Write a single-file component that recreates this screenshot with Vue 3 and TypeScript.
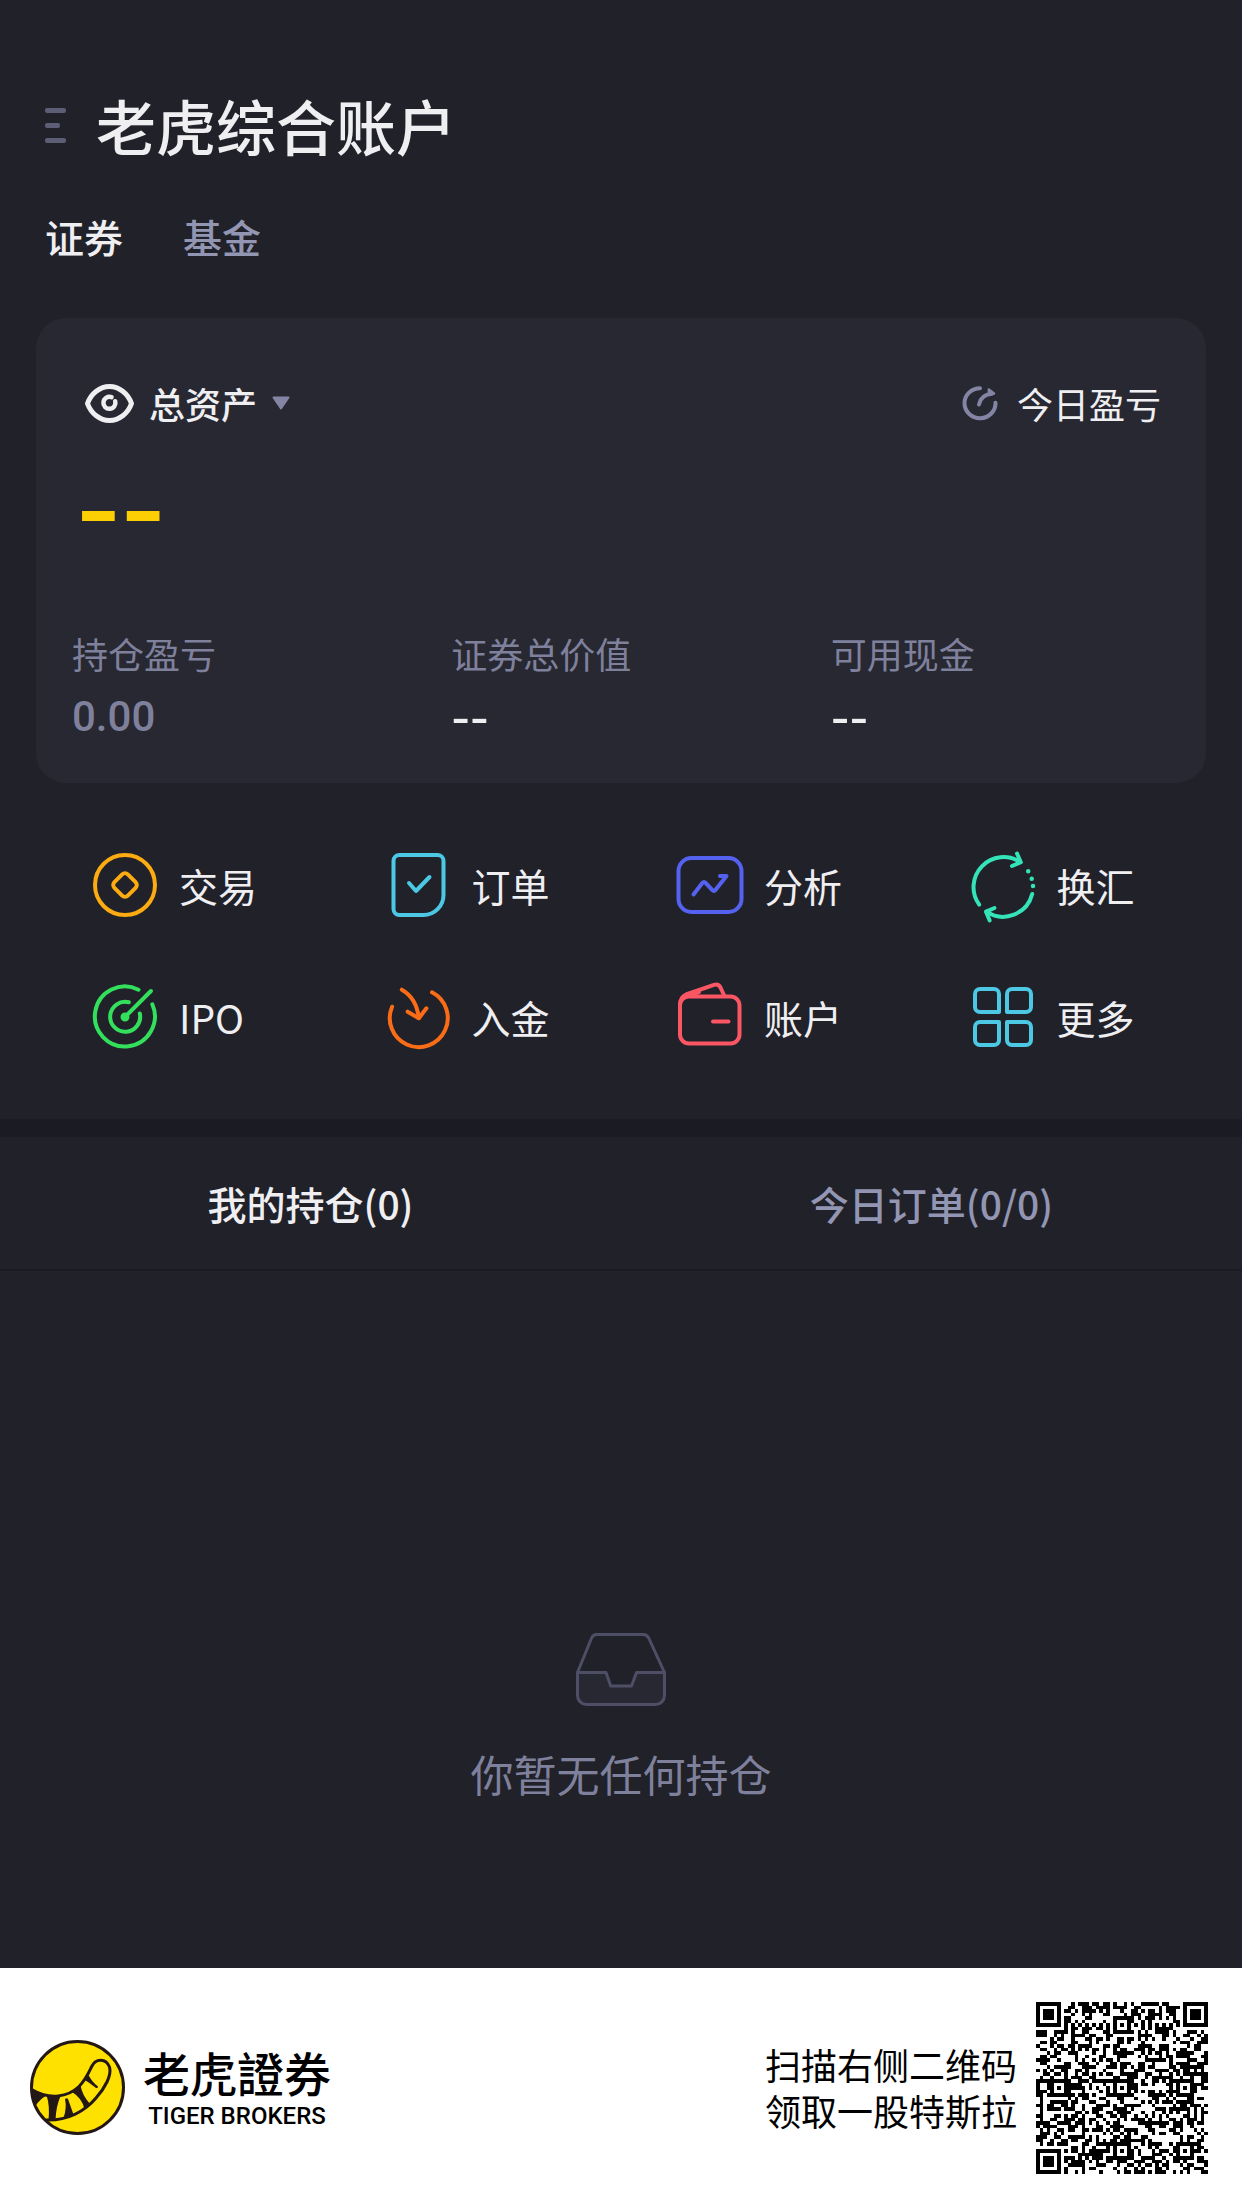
<script setup lang="ts">
import { ref } from 'vue'

type ActionId = 'trade' | 'order' | 'analysis' | 'exchange' | 'ipo' | 'deposit' | 'account' | 'more'

interface Action {
  id: ActionId
  label: string
  color: string
}

interface Stat {
  label: string
  value: string
  empty: boolean
}

const stats: Stat[] = [
  { label: '持仓盈亏', value: '0.00', empty: false },
  { label: '证券总价值', value: '--', empty: true },
  { label: '可用现金', value: '--', empty: true },
]

const actions: Action[] = [
  { id: 'trade', label: '交易', color: '#fcab10' },
  { id: 'order', label: '订单', color: '#4cc8e4' },
  { id: 'analysis', label: '分析', color: '#5562f0' },
  { id: 'exchange', label: '换汇', color: '#34e4b8' },
  { id: 'ipo', label: 'IPO', color: '#33e05c' },
  { id: 'deposit', label: '入金', color: '#fb6c16' },
  { id: 'account', label: '账户', color: '#fb5664' },
  { id: 'more', label: '更多', color: '#4cc8e4' },
]

const accountTabs = ['证券', '基金']
const activeAccount = ref(0)
const listTabs = ['我的持仓(0)', '今日订单(0/0)']
const activeList = ref(0)

const QR_SIZE = 49
const ALIGN = [6, 24, 42]

// Concentric square: dark ring, light ring, dark core
function ring(dx: number, dy: number, outer: number): boolean {
  const d = Math.max(Math.abs(dx), Math.abs(dy))
  return d === outer || d <= outer - 2
}

function moduleAt(x: number, y: number, noise: boolean): boolean {
  const last = QR_SIZE - 1
  for (const [cx, cy] of [[3, 3], [last - 3, 3], [3, last - 3]]) {
    const d = Math.max(Math.abs(x - cx), Math.abs(y - cy))
    if (d === 4) return false
    if (d < 4) return ring(x - cx, y - cy, 3)
  }
  for (const ay of ALIGN) {
    for (const ax of ALIGN) {
      const corner = (ax === 6 && ay !== 24) || (ax === 42 && ay === 6)
      if (!corner && Math.abs(x - ax) <= 2 && Math.abs(y - ay) <= 2) {
        return ring(x - ax, y - ay, 2)
      }
    }
  }
  if (x === 6) return y % 2 === 0
  if (y === 6) return x % 2 === 0
  return noise
}

function buildQr(): string {
  let seed = 20190817
  let d = ''
  for (let y = 0; y < QR_SIZE; y++) {
    for (let x = 0; x < QR_SIZE; x++) {
      seed = (Math.imul(seed, 1664525) + 1013904223) >>> 0
      if (moduleAt(x, y, seed / 4294967296 < 0.5)) d += `M${x} ${y}h1v1h-1z`
    }
  }
  return d
}

const qrPath = buildQr()
</script>

<template>
  <div class="page">
    <header class="header">
      <button class="menu" type="button" aria-label="菜单">
        <span class="bar"></span>
        <span class="bar short"></span>
        <span class="bar"></span>
      </button>
      <h1 class="title">老虎综合账户</h1>
    </header>

    <nav class="account-tabs">
      <button
        v-for="(tab, i) in accountTabs"
        :key="tab"
        type="button"
        class="account-tab"
        :class="{ active: i === activeAccount }"
        @click="activeAccount = i"
      >{{ tab }}</button>
    </nav>

    <section class="card">
      <div class="card-top">
        <button class="total" type="button">
          <svg class="eye" viewBox="0 0 49 39" aria-hidden="true">
            <path d="M2.5 19.5C6 9.500 15 2.500 24.500 2.500S43 9.500 46.500 19.500C43 29.500 34 36.500 24.500 36.500S6 29.500 2.500 19.500Z" fill="none" stroke="currentColor" stroke-width="5" stroke-linejoin="round" />
            <path d="M26.500 13.200A6 6 0 1 0 30.200 17.200" fill="none" stroke="currentColor" stroke-width="4.500" stroke-linecap="round" />
          </svg>
          <span>总资产</span>
          <svg class="caret" viewBox="0 0 18 14" aria-hidden="true">
            <path d="M1.500 1.500h15L9 12.500z" fill="#8485a4" stroke="#8485a4" stroke-width="2" stroke-linejoin="round" />
          </svg>
        </button>
        <button class="today" type="button">
          <svg class="refresh" viewBox="0 0 38 38" aria-hidden="true">
            <g fill="none" stroke="currentColor" stroke-width="4" stroke-linecap="round" stroke-linejoin="round">
              <path d="M19 4.200A15.500 15 0 1 0 34.500 18.700" />
              <path d="M18 20.500C19 15 23 10.500 31 9.500" />
              <path d="M27.800 5.500L33 9.500L28 11z" fill="currentColor" stroke-width="2.500" />
            </g>
          </svg>
          <span>今日盈亏</span>
        </button>
      </div>
      <p class="balance">--</p>
      <dl class="stats">
        <div v-for="s in stats" :key="s.label" class="stat">
          <dt>{{ s.label }}</dt>
          <dd :class="{ dashes: s.empty }">{{ s.value }}</dd>
        </div>
      </dl>
    </section>

    <nav class="actions">
      <button v-for="a in actions" :key="a.id" type="button" class="action">
        <svg
          class="action-icon"
          viewBox="0 0 72 72"
          fill="none"
          :stroke="a.color"
          stroke-width="4"
          stroke-linecap="round"
          stroke-linejoin="round"
          aria-hidden="true"
        >
          <g v-if="a.id === 'trade'">
            <circle cx="36" cy="36" r="30" />
            <rect x="26.500" y="26.500" width="19" height="19" rx="4" transform="rotate(45 36 36)" />
          </g>
          <g v-else-if="a.id === 'order'">
            <path d="M17.500 6H55.500A6 6 0 0 1 61.500 12V46A20 20 0 0 1 41.500 66H17.500A6 6 0 0 1 11.500 60V12A6 6 0 0 1 17.500 6Z" />
            <path d="M27 34L34 42L47.500 28" />
          </g>
          <g v-else-if="a.id === 'analysis'">
            <rect x="4.500" y="9" width="63" height="54" rx="13" />
            <path d="M19.500 45.500L28.500 33.800Q30 32 31.600 33.800L38.400 41.200Q40 42.800 41.400 41L52.500 27H46" />
          </g>
          <g v-else-if="a.id === 'exchange'">
            <path d="M12.200 55.700A30 30 0 0 1 53.200 13.200" />
            <path d="M50 4.500L53.800 13.200L45 17" />
            <path d="M65.200 45A30 30 0 0 1 19.500 62.700" />
            <path d="M27.500 59L19 62.700L22.700 71.500" />
            <path d="M61.200 22.300h.01M64.700 29.700h.01M66 37h.01" stroke-width="4.500" />
          </g>
          <g v-else-if="a.id === 'ipo'">
            <path d="M49.500 8.700A30 30 0 1 0 63.300 23.300" />
            <path d="M39.800 21.200A15 15 0 1 0 50.800 32.500" />
            <path d="M36 36L61.900 10" />
            <circle cx="36" cy="36" r="2.500" />
          </g>
          <g v-else-if="a.id === 'deposit'">
            <path d="M50 11.300A29 29 0 1 1 10.100 25.700" />
            <path d="M19.800 8.700Q34.500 17 36.800 37" />
            <path d="M25.600 30.700L36.800 37.300L44.400 27.300" />
          </g>
          <g v-else-if="a.id === 'account'">
            <rect x="6" y="15.500" width="59.500" height="47" rx="9" />
            <path d="M6 24Q6 16 12 13.500L40 3.800Q44.500 2.500 46.500 6.500L50.400 15" />
            <path d="M12 15.500L25 11" />
            <path d="M39 40.500H54.500" />
          </g>
          <g v-else>
            <path d="M13 8H27A5 5 0 0 1 32 13V31H13A5 5 0 0 1 8 26V13A5 5 0 0 1 13 8Z" />
            <path d="M45 8H59A5 5 0 0 1 64 13V26A5 5 0 0 1 59 31H40V13A5 5 0 0 1 45 8Z" />
            <path d="M13 41H32V59A5 5 0 0 1 27 64H13A5 5 0 0 1 8 59V46A5 5 0 0 1 13 41Z" />
            <path d="M40 41H59A5 5 0 0 1 64 46V59A5 5 0 0 1 59 64H45A5 5 0 0 1 40 59Z" />
          </g>
        </svg>
        <span>{{ a.label }}</span>
      </button>
    </nav>

    <nav class="list-tabs">
      <button
        v-for="(tab, i) in listTabs"
        :key="tab"
        type="button"
        class="list-tab"
        :class="{ active: i === activeList }"
        @click="activeList = i"
      >{{ tab }}</button>
    </nav>

    <section class="empty">
      <svg class="tray" viewBox="0 0 90 73" aria-hidden="true">
        <g stroke="#4e4e66" stroke-width="3" stroke-linejoin="round">
          <path d="M1.500 39.500L15.600 5Q17 1.500 21 1.500H67Q71 1.500 72.700 5L88.500 39.500" fill="none" />
          <path d="M1.500 39.500H30L34.700 53H55.500L60.500 39.500H88.500V62.500A9 9 0 0 1 79.500 71.500H10.500A9 9 0 0 1 1.500 62.500Z" fill="#282832" />
        </g>
      </svg>
      <p>你暂无任何持仓</p>
    </section>

    <footer class="footer">
      <div class="brand">
        <svg class="logo" viewBox="0 0 96 96" aria-hidden="true">
          <circle cx="47.500" cy="47.500" r="46" fill="#ffe100" stroke="#231815" stroke-width="3" />
          <path d="M2.500 50C20 60 38 57 49 46.500C56 39.500 59 32 62 26C66 18 76 18.500 79.500 27C82 35 75 48 66 58C55 71 38 80.500 16.500 80" fill="none" stroke="#231815" stroke-width="3" stroke-linecap="round" />
          <g fill="#231815">
            <path d="M2 49.500L17 55Q9 60 5.500 66Q2 58 2 49.500Z" />
            <path d="M16.500 55H31Q26 66 25.500 80L18.500 80Q20 66 16.500 55Z" />
            <path d="M35 59Q37 57.500 38 59L43.500 74.500L33.500 78Q37 68 35 59Z" />
            <path d="M42 52L50.500 45Q52 55 60 64L54.500 69Q52 58 42 52Z" />
            <path d="M54 39.500L58.500 35Q62 42 68 46.500Q68 48.500 66 48Q60 43 54 39.500Z" />
          </g>
        </svg>
        <div class="brand-text">
          <strong>老虎證券</strong>
          <span>TIGER BROKERS</span>
        </div>
      </div>
      <div class="promo">
        <p>扫描右侧二维码<br />领取一股特斯拉</p>
        <svg class="qr" viewBox="0 0 49 49" shape-rendering="crispEdges" role="img" aria-label="二维码">
          <path :d="qrPath" fill="#000" />
        </svg>
      </div>
    </footer>
  </div>
</template>

<style>
body {
  margin: 0;
  background: #21212a;
}
</style>

<style scoped>
.page {
  display: flex;
  flex-direction: column;
  min-height: 100vh;
  background: #21212a;
  color: #efeff2;
  font-family: 'Noto Sans CJK SC', sans-serif;
}

button {
  margin: 0;
  padding: 0;
  border: 0;
  background: none;
  color: inherit;
  font: inherit;
  cursor: pointer;
}

p,
dl,
dd,
h1 {
  margin: 0;
}

svg {
  display: block;
  flex: none;
  overflow: visible;
}

.header {
  display: flex;
  align-items: center;
  gap: 30px;
  padding: 83px 45px 0;
}

.menu {
  display: flex;
  flex-direction: column;
  gap: 10px;
  width: 21px;
}

.bar {
  height: 5px;
  border-radius: 2px;
  background: #5d5d76;
}

.bar.short {
  width: 15px;
}

.title {
  font-size: 60px;
  font-weight: 500;
  line-height: 84px;
}

.account-tabs {
  display: flex;
  gap: 60px;
  padding: 41px 45px 54px;
}

.account-tab {
  color: #9296b2;
  font-size: 39px;
  font-weight: 500;
  line-height: 56px;
}

.account-tab.active {
  color: #efeff2;
}

.card {
  margin: 0 36px;
  border-radius: 30px;
  background: #282832;
}

.card-top {
  display: flex;
  align-items: center;
  justify-content: space-between;
  padding: 59px 45px 0 49px;
  font-size: 36px;
  line-height: 52px;
}

.total,
.today {
  display: flex;
  align-items: center;
}

.total {
  gap: 15px;
  font-weight: 500;
}

.today {
  gap: 18px;
}

.eye {
  width: 49px;
  height: 39px;
}

.caret {
  width: 18px;
  height: 14px;
}

.refresh {
  width: 38px;
  height: 38px;
  color: #8485a4;
}

.balance {
  padding: 30px 40px 0;
  color: #fbcf04;
  font-family: 'DejaVu Sans', sans-serif;
  font-size: 124px;
  line-height: 96px;
}

.stats {
  display: grid;
  grid-template-columns: repeat(3, 1fr);
  column-gap: 4px;
  padding: 72px 0 36px 36px;
}

.stat dt {
  color: #7f819c;
  font-size: 36px;
  line-height: 52px;
}

.stat dd {
  padding-top: 8px;
  color: #7f819c;
  font-family: Roboto, sans-serif;
  font-size: 42px;
  font-weight: 500;
  line-height: 60px;
}

.stat .dashes {
  color: #efeff2;
  font-family: 'DejaVu Sans', sans-serif;
  font-size: 52px;
  font-weight: 400;
}

.actions {
  display: grid;
  grid-template-columns: repeat(4, 1fr);
  row-gap: 60px;
  padding: 66px 36px;
}

.action {
  display: flex;
  align-items: center;
  gap: 18px;
  padding-left: 53px;
  font-size: 39px;
  line-height: 56px;
}

.action-icon {
  width: 72px;
  height: 72px;
}

.list-tabs {
  display: grid;
  grid-template-columns: 1fr 1fr;
  border-top: 18px solid #1b1b24;
  border-bottom: 2px solid #1b1b24;
}

.list-tab {
  padding: 38px 0;
  color: #9296b2;
  font-size: 39px;
  font-weight: 500;
  line-height: 56px;
}

.list-tab.active {
  color: #efeff2;
}

.empty {
  flex: 1;
  display: flex;
  flex-direction: column;
  align-items: center;
  gap: 35px;
  padding: 362px 0 120px;
  color: #7f819c;
  font-size: 43px;
  line-height: 64px;
}

.tray {
  width: 90px;
  height: 73px;
}

.footer {
  display: flex;
  justify-content: space-between;
  padding: 34px 34px 34px 30px;
  background: #fff;
  color: #000;
}

.brand {
  display: flex;
  align-items: center;
  gap: 17px;
}

.logo {
  width: 96px;
  height: 96px;
}

.brand-text {
  display: flex;
  flex-direction: column;
  align-items: center;
  gap: 4px;
  padding-bottom: 4px;
}

.brand-text strong {
  font-family: 'Noto Sans CJK TC', sans-serif;
  font-size: 47px;
  font-weight: 500;
  line-height: 56px;
}

.brand-text span {
  font-family: Roboto, sans-serif;
  font-size: 24px;
  font-weight: 500;
  line-height: 24px;
}

.promo {
  display: flex;
  align-items: center;
  gap: 19px;
  font-family: Roboto, 'Noto Sans CJK SC', sans-serif;
  font-size: 36px;
  line-height: 46px;
}

.promo p {
  padding-top: 6px;
}

.qr {
  width: 172px;
  height: 172px;
}
</style>
